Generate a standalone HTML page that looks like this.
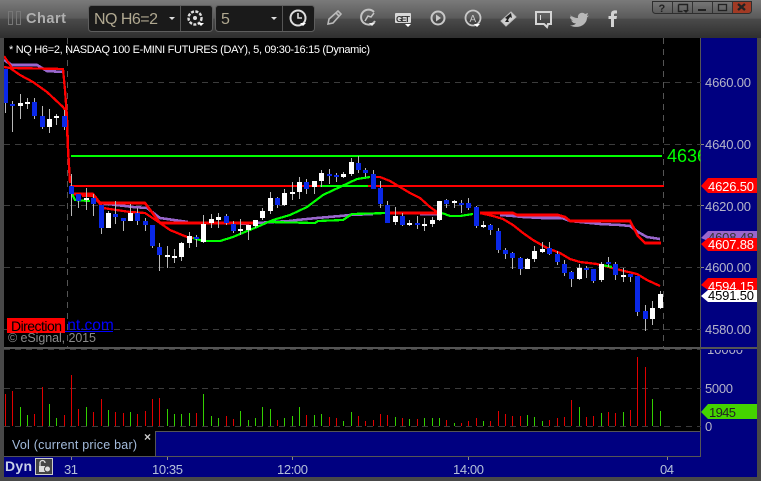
<!DOCTYPE html>
<html><head><meta charset="utf-8"><title>Chart</title>
<style>html,body{margin:0;padding:0;width:761px;height:481px;overflow:hidden;background:#484848}svg{display:block}text{font-family:"Liberation Sans",Arial,sans-serif}</style></head>
<body>
<svg width="761" height="481" viewBox="0 0 761 481" xmlns="http://www.w3.org/2000/svg">
<defs>
<linearGradient id="tb" x1="0" y1="0" x2="0" y2="1"><stop offset="0" stop-color="#7a7a7a"/><stop offset=".48" stop-color="#5a5a5a"/><stop offset=".5" stop-color="#4a4a4a"/><stop offset="1" stop-color="#2f2f2f"/></linearGradient>
<linearGradient id="wb" x1="0" y1="0" x2="0" y2="1"><stop offset="0" stop-color="#777"/><stop offset="1" stop-color="#5a5a5a"/></linearGradient>
<clipPath id="gc"><rect x="4" y="38" width="697" height="310"/></clipPath>
<clipPath id="vc"><rect x="701" y="350" width="56" height="80"/></clipPath>
<clipPath id="tg"><rect x="660" y="140" width="40.500" height="30"/></clipPath>
</defs>
<rect width="761" height="481" fill="#484848"/>
<rect width="761" height="38" fill="url(#tb)"/>
<!-- title -->
<path d="M8.500 11.500h4v13h-4zM16.500 11.500h4v13h-4z" fill="none" stroke="#777"/>
<text x="26" y="23" font-size="14.500" font-weight="bold" fill="#b0b0b0" textLength="40">Chart</text>
<!-- selectors -->
<rect x="88.500" y="5.500" width="124" height="26" rx="3" fill="#1a1a1a" stroke="#5e5e5e"/>
<path d="M180.500 6V31" stroke="#555"/>
<text x="94" y="24" font-size="16" fill="#b0a890" textLength="64">NQ H6=2</text>
<path d="M169 17h6l-3 3z" fill="#ddd"/>
<rect x="215.500" y="5.500" width="99" height="26" rx="3" fill="#1a1a1a" stroke="#5e5e5e"/>
<path d="M282.500 6V31" stroke="#555"/>
<text x="221" y="24" font-size="16" fill="#b0a890">5</text>
<path d="M271 17h6l-3 3z" fill="#ddd"/>
<circle cx="195" cy="18" r="6.500" fill="none" stroke="#ddd" stroke-width="2.400" stroke-dasharray="3 1.400"/>
<circle cx="195" cy="18" r="2" fill="#ddd"/>
<path d="M198 23h6l-3 3z" fill="#fff"/>
<circle cx="298" cy="18" r="7.500" fill="none" stroke="#ddd" stroke-width="2"/>
<path d="M298 13v5h4" fill="none" stroke="#ddd" stroke-width="1.600"/>
<path d="M300 23h6l-3 3z" fill="#fff"/>
<!-- tools -->
<path d="M328 24l1-5 9-8 3 3-8 9zM336 13l3 3" fill="none" stroke="#bbb" stroke-width="1.600"/>
<path d="M374 12a7.500 7.500 0 1 0 1 9" fill="none" stroke="#c4c4c4" stroke-width="2"/>
<path d="M365 21l3-5 3 1 3-4" fill="none" stroke="#c4c4c4" stroke-width="1.500"/>
<path d="M369 23h6l-3 3z" fill="#eee"/>
<rect x="395" y="13" width="16" height="10" rx="1" fill="#d8d8d8"/>
<text x="396" y="22" font-size="8.500" font-weight="bold" fill="#333" textLength="14">GET</text>
<path d="M405 24h6l-3 3z" fill="#fff"/>
<circle cx="438" cy="18" r="6.500" fill="none" stroke="#c8c8c8" stroke-width="2"/><path d="M436 14.500l5 3.500-5 3.500z" fill="#c8c8c8"/>
<circle cx="473" cy="18" r="7.500" fill="none" stroke="#c8c8c8" stroke-width="1.800"/>
<text x="469.500" y="22" font-size="10" fill="#c8c8c8">A</text>
<path d="M474 24h6l-3 3z" fill="#fff"/>
<path d="M501 21l10-9 5 5-10 9z" fill="#d0d0d0" stroke="#bbb"/><path d="M505 22l2-3-2-1 6 -5 1 5-2-1-2 3 1 2z" fill="#222"/>
<path d="M536 12h15v12h-3l-1 3-3-3h-8z" fill="none" stroke="#d4d4d4" stroke-width="2"/><path d="M540.500 15v5" stroke="#ddd"/>
<path d="M570 15c3 2 5 3 8 3-1-4 4-7 7-4l3-1-1 3 2-.5-2 2c0 7-8 12-17 8 3 0 5-1 6-2-3 0-4-2-5-3h2c-2-1-3-2-3-4l2 .5c-2-1-2-3-2-4z" fill="#b8b8b8"/>
<path d="M611 27v-8h-2.500v-3h2.500v-2c0-3 2-4 6-3.500v3c-2 0-3 0-3 1v1.500h3l-.5 3h-2.500v8z" fill="#d4d4d4"/>
<!-- window buttons -->
<path d="M652.500 1.500h99v9a3 3 0 0 1-3 3h-93a3 3 0 0 1-3-3z" fill="url(#wb)" stroke="#2e2e2e"/>
<path d="M732.500 2h18.500v8a3 3 0 0 1-3 3h-15.500z" fill="#a23a24"/>
<path d="M672.500 2v11M692.500 2v11M712.500 2v11M732.500 2v11" stroke="#333"/>
<text x="658.500" y="12" font-size="11" font-weight="bold" fill="#222">?</text>
<path d="M678.500 4.500h9v6" fill="none" stroke="#222" stroke-width="1.400"/><path d="M678.500 4.500v7h4" fill="none" stroke="#222" stroke-width="1.400"/><path d="M683 10h6l-3 3z" fill="#222"/>
<rect x="698" y="9" width="8" height="2" fill="#222"/>
<rect x="718.500" y="4.500" width="8" height="6" fill="none" stroke="#222" stroke-width="1.300"/>
<path d="M738 4l7 6M745 4l-7 6" stroke="#222" stroke-width="2.400"/>
<!-- panes -->
<rect x="4" y="38" width="697" height="393" fill="#000"/>
<rect x="701" y="38" width="56" height="419" fill="#000080"/>
<rect x="4" y="431" width="151" height="26" fill="#000"/>
<rect x="155" y="431" width="546" height="26" fill="#000080"/>
<rect x="4" y="457" width="753" height="20" fill="#000080"/>
<path d="M155.500 431.500H701M4 456.500H701M700.500 38V457M155.500 431V457" stroke="#555" fill="none" shape-rendering="crispEdges"/>
<g stroke="#3c3c3c" stroke-dasharray="6 5" shape-rendering="crispEdges">
<path d="M4 82.500H701M4 144.500H701M4 205.500H701M4 267.500H701M4 329.500H701"/>
<path d="M4 349.500H701M4 388.500H701M4 426.500H701"/>
<path d="M67.500 38V348M663.500 38V348" stroke="#555"/>
</g>
<!-- ma lines -->
<g clip-path="url(#gc)" fill="none" shape-rendering="crispEdges">
<path stroke="#9966cc" stroke-width="2.600" d="M4 60L12 65H37L47 71L63 72M100 203L133 207L147 208L160 218L188 222M240 224L290 221L297 220L307 219L317 218L340 216L350 215L373 214M420 214H437M500 215L513 216L523 217L542 218H562L570 221L580 222L600 224L620 225L630 226L638 232L647 237L660 239"/>
<path stroke="#f00" stroke-width="2.600" d="M72 194H93L100 203H145L160 223H253M390 213H437M480 213H513L517 215H558L565 217L570 221H630L638 236L645 243H661"/>
<path stroke="#f00" stroke-width="2.300" d="M4 56L12 68L63 69L65 90L67 117L68 147L70 183M4 67L10 68L20 75L33 82L47 92L63 107L65 110L67 127L68 150L70 183M82 196H93L100 204L103 208L130 212L145 213L160 223L170 230L187 237L193 238M375 177H380L390 181L400 187L410 193L420 198L430 207L437 212M480 213L493 216L503 219L513 225L523 233L533 240L547 248L560 253L570 259L580 262L597 264L620 270L637 274L647 280L660 286"/>
<path stroke="#f00" stroke-width="2" d="M70 186H664"/>
<path stroke="#0f0" stroke-width="2" d="M71 156H662M320 186H368"/>
<path stroke="#0f0" stroke-width="2.200" d="M72 194L75 200L90 201M193 238L203 241H220L233 237L240 234L257 227L273 220L290 215L307 207L323 195L340 187L357 179L370 177M267 222L315 223L318 221L343 220L352 214L387 213M442 213L450 216H460L473 214M602 265L612 267"/>
</g>
<!-- candles -->
<g shape-rendering="crispEdges">
<path fill="none" stroke="#b8b8b8" d="M5.500 69V113M12.500 101V132M20.500 94V119M27.500 98V109M34.500 98V119M42.500 106V129M49.500 109V133M56.500 114V125M64.500 110V130M71.500 174V216M78.500 194V208M86.500 188V210M93.500 194V216M101.500 205V234M108.500 211V228M115.500 201V224M123.500 218V231M130.500 204V221M137.500 208V225M145.500 218V231M152.500 225V248M159.500 243V271M167.500 246V268M174.500 249V263M181.500 242V261M189.500 232V248M196.500 235V247M203.500 215V243M211.500 214V228M218.500 213V228M226.500 214V225M233.500 221V233M240.500 219V235M248.500 225V240M255.500 220V228M262.500 208V220M270.500 192V214M277.500 197V208M284.500 189V206M292.500 182V200M299.500 177V199M306.500 179V194M314.500 181V194M321.500 170V187M329.500 169V184M336.500 173V182M343.500 172V178M351.500 158V176M358.500 156V173M365.500 168V177M373.500 170V189M380.500 181V208M387.500 201V223M395.500 207V225M402.500 213V226M409.500 220V226M417.500 216V229M424.500 218V231M432.500 217V227M439.500 201V221M446.500 199V208M454.500 200V208M461.500 200V213M468.500 198V210M476.500 206V228M483.500 221V228M490.500 224V235M498.500 228V253M505.500 248V259M512.500 252V269M520.500 257V275M527.500 258V269M534.500 246V262M542.500 242V253M549.500 242V255M557.500 251V265M564.500 260V276M571.500 271V287M579.500 264V280M586.500 266V278M593.500 269V283M601.500 262V282M608.500 257V267M615.500 262V280M623.500 268V282M630.500 274V282M637.500 276V316M645.500 305V331M652.500 301V325M660.500 291V309"/>
<path fill="#0a28e8" d="M4 69h4v34h-4zM10 104h5v2h-5zM32 102h5v14h-5zM40 116h5v11h-5zM62 116h5v11h-5zM69 186h5v8h-5zM76 194h5v7h-5zM91 198h5v6h-5zM99 205h5v23h-5zM113 214h5v3h-5zM121 218h5v3h-5zM135 213h5v8h-5zM143 221h5v4h-5zM150 225h5v21h-5zM157 247h5v8h-5zM194 237h5v2h-5zM224 216h5v7h-5zM231 224h5v7h-5zM275 198h5v7h-5zM304 182h5v7h-5zM327 174h5v2h-5zM334 175h5v2h-5zM356 163h5v7h-5zM363 170h5v3h-5zM371 174h5v15h-5zM378 188h5v16h-5zM385 205h5v18h-5zM400 216h5v9h-5zM415 223h5v2h-5zM444 200h5v4h-5zM459 203h5v2h-5zM466 203h5v5h-5zM474 207h5v19h-5zM488 225h5v5h-5zM496 231h5v19h-5zM503 250h5v4h-5zM510 253h5v5h-5zM518 258h5v11h-5zM547 248h5v6h-5zM555 254h5v8h-5zM562 264h5v9h-5zM569 272h5v7h-5zM584 268h5v2h-5zM591 269h5v12h-5zM606 262h5v2h-5zM613 264h5v11h-5zM628 274h5v3h-5zM635 276h5v36h-5zM643 311h5v8h-5z"/>
<path fill="#fff" d="M18 103h5v3h-5zM25 102h5v2h-5zM47 119h5v8h-5zM54 116h5v2h-5zM84 198h5v2h-5zM106 213h5v15h-5zM128 213h5v8h-5zM165 255h5v2h-5zM172 256h5v2h-5zM179 243h5v14h-5zM187 236h5v7h-5zM201 224h5v18h-5zM209 219h5v4h-5zM216 217h5v3h-5zM238 229h5v2h-5zM246 225h5v5h-5zM253 220h5v6h-5zM260 211h5v7h-5zM268 198h5v13h-5zM282 193h5v12h-5zM290 192h5v2h-5zM297 182h5v10h-5zM312 181h5v6h-5zM319 173h5v8h-5zM341 174h5v3h-5zM349 162h5v12h-5zM393 216h5v6h-5zM407 223h5v2h-5zM422 224h5v2h-5zM430 220h5v4h-5zM437 201h5v19h-5zM452 201h5v2h-5zM481 225h5v2h-5zM525 259h5v10h-5zM532 251h5v8h-5zM540 249h5v3h-5zM577 268h5v11h-5zM599 264h5v16h-5zM621 275h5v2h-5zM650 308h5v11h-5zM658 294h5v14h-5z"/>
</g>
<!-- header -->
<text x="9" y="53" font-size="11" fill="#fff" textLength="361">* NQ H6=2, NASDAQ 100 E-MINI FUTURES (DAY), 5, 09:30-16:15 (Dynamic)</text>
<!-- direction -->
<text x="67.300" y="330" font-size="15.500" fill="#00f">nt.com</text>
<rect x="65" y="331" width="48" height="1" fill="#00f"/>
<rect x="7" y="318" width="58" height="15" fill="#f00"/>
<text x="11" y="331" font-size="14" fill="#000" textLength="51">Direction</text>
<text x="8" y="342" font-size="12.500" fill="#8a8a8a" textLength="88">© eSignal, 2015</text>
<!-- green price -->
<text x="667" y="162" font-size="18" fill="#0f0" clip-path="url(#tg)">4636.50</text>
<!-- separator -->
<rect x="4" y="347" width="753" height="2" fill="#555"/>
<!-- price axis -->
<g font-size="13" fill="#b4b4c8">
<text x="705" y="87" textLength="46">4660.00</text>
<text x="705" y="149" textLength="46">4640.00</text>
<text x="705" y="211" textLength="46">4620.00</text>
<text x="705" y="272" textLength="46">4600.00</text>
<text x="705" y="334" textLength="46">4580.00</text>
</g>
<path d="M701 144.500h3M701 205.500h3M701 267.500h3" stroke="#888" shape-rendering="crispEdges"/>
<path d="M701 186l7-8h49v15h-49z" fill="#f00"/>
<text x="708" y="191" font-size="13" fill="#fff" textLength="46">4626.50</text>
<path d="M701 238l7-7h49v10h-49z" fill="#9966cc"/>
<text x="708" y="242" font-size="13" fill="#333" textLength="46">4608.48</text>
<path d="M701 244l7-6h49v13h-49z" fill="#f00"/>
<text x="708" y="249" font-size="13" fill="#fff" textLength="46">4607.88</text>
<path d="M701 285l7-7h49v12h-49z" fill="#f00"/>
<text x="708" y="291" font-size="13" fill="#fff" textLength="46">4594.15</text>
<path d="M701 296l7-6h49v12h-49z" fill="#fff"/>
<text x="708" y="300" font-size="13" fill="#000" textLength="46">4591.50</text>
<!-- volume -->
<g stroke="#e00000" shape-rendering="crispEdges"><path d="M5.500 426V394M12.500 426V391M34.500 426V414M42.500 426V387M64.500 426V415M71.500 426V375M78.500 426V409M93.500 426V412M101.500 426V399M115.500 426V412M123.500 426V413M137.500 426V414M145.500 426V411M152.500 426V399M159.500 426V398M196.500 426V413M226.500 426V416M233.500 426V419M277.500 426V420M306.500 426V415M329.500 426V417M336.500 426V418M358.500 426V416M365.500 426V421M373.500 426V420M380.500 426V414M387.500 426V415M402.500 426V418M417.500 426V419M446.500 426V420M461.500 426V423M468.500 426V421M476.500 426V418M490.500 426V421M498.500 426V411M505.500 426V414M512.500 426V416M520.500 426V416M549.500 426V420M557.500 426V418M564.500 426V417M571.500 426V400M586.500 426V417M593.500 426V416M608.500 426V412M615.500 426V413M630.500 426V410M637.500 426V357M645.500 426V367"/></g>
<g stroke="#33d000" shape-rendering="crispEdges"><path d="M20.500 426V407M27.500 426V415M49.500 426V404M56.500 426V418M86.500 426V407M108.500 426V410M130.500 426V412M167.500 426V409M174.500 426V414M181.500 426V414M189.500 426V413M203.500 426V394M211.500 426V416M218.500 426V418M240.500 426V411M248.500 426V420M255.500 426V418M262.500 426V407M270.500 426V409M284.500 426V418M292.500 426V416M299.500 426V407M314.500 426V415M321.500 426V414M343.500 426V421M351.500 426V412M395.500 426V417M409.500 426V419M424.500 426V418M432.500 426V418M439.500 426V418M454.500 426V423M483.500 426V421M527.500 426V415M534.500 426V417M542.500 426V421M579.500 426V407M601.500 426V413M623.500 426V412M652.500 426V399M660.500 426V411"/></g>
<g font-size="13" fill="#b4b4c8">
<text x="707" y="354" textLength="36" clip-path="url(#vc)">10000</text>
<text x="705" y="393" textLength="28">5000</text>
<text x="705" y="431">0</text>
</g>
<path d="M701 412l7-8h49v15h-49z" fill="#44d400"/>
<text x="709" y="417" font-size="13" fill="#222" textLength="27">1945</text>
<!-- vol label -->
<text x="12" y="449" font-size="12.500" fill="#a4bcdc" textLength="125">Vol (current price bar)</text>
<text x="144" y="441" font-size="12" font-weight="bold" fill="#ccc">×</text>
<!-- bottom axis -->
<text x="5" y="471" font-size="14" font-weight="bold" fill="#c8d0e8" textLength="27">Dyn</text>
<rect x="35.500" y="458.500" width="17" height="16" fill="#444" stroke="#ccc"/>
<path d="M40 466v-3a2.500 2.500 0 0 1 5 0" fill="none" stroke="#ddd" stroke-width="1.300"/><rect x="39" y="466" width="6" height="6" fill="#ddd"/><circle cx="47.500" cy="469" r="3" fill="#ddd" stroke="#444"/>
<path d="M71.500 457v3M167.500 457v3M292.500 457v3M468.500 457v3M667.500 457v3" stroke="#888" shape-rendering="crispEdges"/>
<g font-size="13" fill="#b4c0d8">
<text x="64" y="474" textLength="14">31</text>
<text x="152" y="474" textLength="31">10:35</text>
<text x="277" y="474" textLength="31">12:00</text>
<text x="453" y="474" textLength="31">14:00</text>
<text x="660" y="474" textLength="14">04</text>
</g>
</svg>
</body></html>
